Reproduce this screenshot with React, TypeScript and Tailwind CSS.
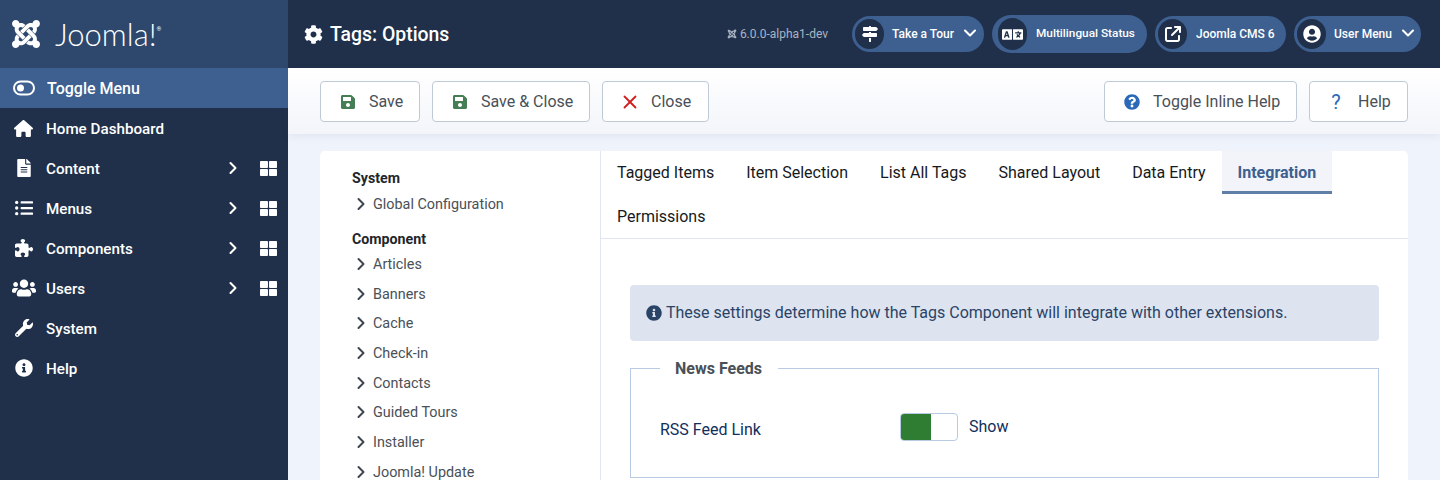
import React from 'react';
import {
  FaFileAlt, FaListUl, FaUsers, FaWrench, FaInfoCircle, FaThLarge,
  FaCog, FaSave, FaQuestionCircle, FaMapSigns, FaLanguage, FaUserCircle, FaJoomla,
} from 'react-icons/fa';
import { FaArrowUpRightFromSquare, FaHouse, FaPuzzlePiece } from 'react-icons/fa6';
import { ChevronRight, ChevronDown, X } from 'lucide-react';

const sideItems = [
  { label: 'Home Dashboard', icon: FaHouse, size: 19 },
  { label: 'Content', icon: FaFileAlt, size: 18, more: true },
  { label: 'Menus', icon: FaListUl, size: 18, more: true },
  { label: 'Components', icon: FaPuzzlePiece, size: 18, more: true },
  { label: 'Users', icon: FaUsers, size: 24, more: true },
  { label: 'System', icon: FaWrench, size: 18 },
  { label: 'Help', icon: FaInfoCircle, size: 18 },
];

const components = ['Articles', 'Banners', 'Cache', 'Check-in', 'Contacts', 'Guided Tours', 'Installer', 'Joomla! Update'];
const tabs = ['Tagged Items', 'Item Selection', 'List All Tags', 'Shared Layout', 'Data Entry', 'Integration'];

function Pill({ icon, label, caret, w, textClass }: { icon: React.ReactNode; label: string; caret?: boolean; w: string; textClass: string }) {
  return (
    <div className={`${w} h-9 rounded-full bg-[#3d6091] flex items-center pl-[3px] text-white text-xs font-medium`}>
      <span className="w-[29px] h-[30px] rounded-full bg-[#20304a] flex items-center justify-center shrink-0">{icon}</span>
      <span className={`${textClass} whitespace-nowrap`}>{label}</span>
      {caret && <ChevronDown size={20} strokeWidth={2.5} className="ml-[6px] -mt-0.5" />}
    </div>
  );
}

function ToolButton({ icon, label, w }: { icon: React.ReactNode; label: string; w: string }) {
  return (
    <button className={`${w} h-[41px] flex items-center bg-white border border-[#c0c9d6] rounded text-base text-[#495057] pl-[19px]`}>
      <span className="w-[16px] flex justify-center">{icon}</span>
      <span className="ml-[13px] whitespace-nowrap">{label}</span>
    </button>
  );
}

function TreeItem({ label, h }: { label: string; h: string }) {
  return (
    <div className={`${h} flex items-center text-[14.4px] text-[#495057]`}>
      <ChevronRight size={20} strokeWidth={2.4} className="text-[#3d4650] -ml-[1px] mr-[2px]" />
      <span className="pt-[2px]">{label}</span>
    </div>
  );
}

export default function App() {
  return (
    <div className="h-[480px] w-[1440px] overflow-hidden flex bg-[#eff3fb] font-['Roboto',sans-serif]">
      {/* Sidebar */}
      <aside className="w-[288px] shrink-0 bg-[#20304a] text-white">
        <div className="h-[68px] bg-[#2d486c] flex items-center pl-[10px]">
          <FaJoomla size={32} />
          <span className="ml-[13px] text-[31px] leading-none font-['Lato',sans-serif] font-light">Joomla!</span>
          <span className="text-[6px] self-start mt-[24px]">®</span>
        </div>
        <div className="h-10 bg-[#3d6091] flex items-center pl-[13px] text-base font-medium">
          <svg width="22" height="16" viewBox="0 0 22 16" fill="none">
            <rect x="1" y="1.5" width="20" height="13" rx="6.5" stroke="currentColor" strokeWidth="2" />
            <circle cx="7.5" cy="8" r="3.5" fill="currentColor" />
          </svg>
          <span className="ml-[12px] pt-[1px]">Toggle Menu</span>
        </div>
        {sideItems.map(({ label, icon: Icon, size, more }) => (
          <div key={label} className="h-10 flex items-center text-[15.2px] font-medium">
            <span className="w-[46px] flex justify-center pl-[1px]"><Icon size={size} /></span>
            <span className="pt-[2px]">{label}</span>
            {more && (
              <span className="ml-auto flex items-center pr-[11px]">
                <ChevronRight size={20} strokeWidth={2.5} className="mr-[17px]" />
                <FaThLarge size={17} />
              </span>
            )}
          </div>
        ))}
      </aside>

      <div className="flex-1 min-w-0">
        {/* Header */}
        <header className="h-[68px] bg-[#20304a] flex items-center text-white pl-[16px] pr-[19px]">
          <FaCog size={19} />
          <h1 className="ml-[7px] text-[19.4px] font-medium pt-[2px]">Tags: Options</h1>
          <span className="ml-auto mr-[24px] flex items-center gap-[3px] text-xs text-[#a9b4c4]">
            <FaJoomla size={10} />
            6.0.0-alpha1-dev
          </span>
          <div className="flex items-center gap-2">
            <Pill w="w-[132px]" textClass="ml-[8px]" label="Take a Tour" caret icon={<FaMapSigns size={16} />} />
            <div className="w-[155px] h-[38px] rounded-full bg-[#3d6091] flex items-center pl-[6px] text-white text-[11.8px] font-medium">
              <span className="w-[29px] h-[32px] rounded-full bg-[#20304a] flex items-center justify-center shrink-0"><FaLanguage size={21} /></span>
              <span className="ml-[9px] whitespace-nowrap">Multilingual Status</span>
            </div>
            <Pill w="w-[131px]" textClass="ml-[9px]" label="Joomla CMS 6" icon={<FaArrowUpRightFromSquare size={16} />} />
            <Pill w="w-[127px]" textClass="ml-[8px]" label="User Menu" caret icon={<FaUserCircle size={18} />} />
          </div>
        </header>

        {/* Toolbar */}
        <div className="h-[66px] px-[32px] flex items-center justify-between bg-gradient-to-b from-white to-[#f3f5fa] shadow-[0_2px_8px_rgba(40,70,120,0.08)] -mb-px pt-[1px]">
          <div className="flex gap-3">
            <ToolButton w="w-[100px]" label="Save" icon={<FaSave size={16} className="text-[#457d54]" />} />
            <ToolButton w="w-[158px]" label="Save & Close" icon={<FaSave size={16} className="text-[#457d54]" />} />
            <ToolButton w="w-[107px]" label="Close" icon={<X size={22} strokeWidth={2} className="text-[#d11f1f] shrink-0" />} />
          </div>
          <div className="flex gap-3">
            <ToolButton w="w-[193px]" label="Toggle Inline Help" icon={<FaQuestionCircle size={16} className="text-[#2a69b8]" />} />
            <ToolButton w="w-[99px]" label="Help" icon={<span className="text-xl leading-none text-[#2a69b8] mr-[2px]">?</span>} />
          </div>
        </div>

        {/* Card */}
        <main className="mx-[32px] mt-[18px] bg-white rounded-[5px] flex h-[400px]">
          <nav className="w-[281px] shrink-0 border-r border-[#dfe5f1] pl-[32px] pt-[17px]">
            <div className="text-[14.2px] font-bold text-[#22262a] leading-5">System</div>
            <div><TreeItem h="h-[32px]" label="Global Configuration" /></div>
            <div className="text-[14.2px] font-bold text-[#22262a] leading-5 mt-[9px]">Component</div>
            <div>
              {components.map((c) => <TreeItem key={c} h="h-[29.7px]" label={c} />)}
            </div>
          </nav>

          <section className="flex-1 min-w-0">
            <div className="flex flex-wrap border-b border-[#dfe5f1]">
              {tabs.map((t) =>
                t === 'Integration' ? (
                  <div key={t} className="h-[43px] px-4 flex items-center bg-[#f2f4f9] border-b-[3px] border-[#5f7fa8] text-base font-bold text-[#3d6091] pt-[3px]">{t}</div>
                ) : (
                  <div key={t} className="h-[43px] px-4 flex items-center text-base text-[#16191d]">{t}</div>
                ),
              )}
              <div className="h-[44px] px-4 flex items-center text-base text-[#16191d] pt-[2px]">Permissions</div>
            </div>

            <div className="px-[29px] pt-[46px]">
              <div className="h-[56px] rounded bg-[#dde3ef] flex items-center pl-4 text-base text-[#2a4468]">
                <FaInfoCircle size={16} className="mr-[4px]" />
                These settings determine how the Tags Component will integrate with other extensions.
              </div>
              <fieldset className="mt-[16px] border border-[#b9cbe4] h-[121px] px-[29px]">
                <legend className="pl-[15px] pr-[16px] text-base leading-[23px] font-bold text-[#495057]">News Feeds</legend>
                <div className="flex items-start mt-[33px]">
                  <label className="w-[240px] text-base text-[#112f5c] pt-[5px]">RSS Feed Link</label>
                  <div className="flex items-center">
                    <div className="w-[58px] h-[28px] border border-[#b9cbe4] rounded-[4px] overflow-hidden bg-white">
                      <div className="w-[30px] h-full bg-[#2f7d32]" />
                    </div>
                    <span className="ml-[11px] text-base text-[#112f5c]">Show</span>
                  </div>
                </div>
              </fieldset>
            </div>
          </section>
        </main>
      </div>
    </div>
  );
}
